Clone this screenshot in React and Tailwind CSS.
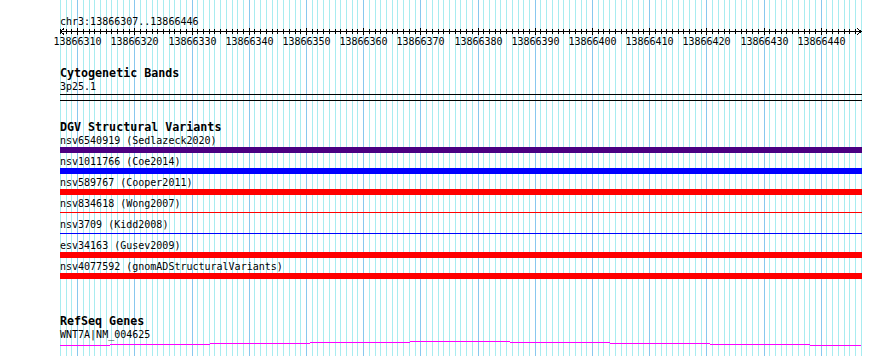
import React from 'react';

const START = 13866307;
const END = 13866446;
const X0 = 60;
const PX = 5.72;
const xOf = (b) => Math.round(X0 + (b - START) * PX);

const mono = { fontFamily: '"DejaVu Sans Mono", "Liberation Mono", monospace' };

const variants = [
  { id: 'nsv6540919', study: 'Sedlazeck2020', color: 'bg-[#4b0082]', thin: false },
  { id: 'nsv1011766', study: 'Coe2014', color: 'bg-[#0000ff]', thin: false },
  { id: 'nsv589767', study: 'Cooper2011', color: 'bg-[#ff0000]', thin: false },
  { id: 'nsv834618', study: 'Wong2007', color: 'bg-[#ff0000]', thin: true },
  { id: 'nsv3709', study: 'Kidd2008', color: 'bg-[#0000ff]', thin: true },
  { id: 'esv34163', study: 'Gusev2009', color: 'bg-[#ff0000]', thin: false },
  { id: 'nsv4077592', study: 'gnomADStructuralVariants', color: 'bg-[#ff0000]', thin: false },
];

// intron line of the gene, stepped like the original raster
const geneSteps = [
  [60, 110, 4],
  [110, 210, 3],
  [210, 310, 2],
  [310, 410, 1],
  [410, 510, 0],
  [510, 610, 1],
  [610, 710, 2],
  [710, 810, 3],
  [810, 861, 4],
];

function Grid() {
  const lines = [];
  for (let b = START; b <= END + 1; b++) {
    lines.push(
      <rect
        key={b}
        x={xOf(b)}
        y={0}
        width={1}
        height={356}
        fill={b % 10 === 0 ? '#88c8ee' : '#a8ecf0'}
      />
    );
  }
  return (
    <svg className="absolute inset-0 pointer-events-none" width="890" height="356" shapeRendering="crispEdges">
      {lines}
    </svg>
  );
}

function Ruler() {
  const ticks = [];
  const labels = [];
  for (let b = START; b <= END; b++) {
    const x = xOf(b) - X0 + 0.5;
    const major = b % 10 === 0;
    ticks.push(<line key={b} x1={x} x2={x} y1={major ? 0 : 1} y2={major ? 7 : 6} stroke="#000" strokeWidth="1" />);
    if (major) {
      labels.push(
        <text key={'l' + b} x={x} y={16.5} textAnchor="middle" fontSize="10" fill="#000" style={mono}>
          {b}
        </text>
      );
    }
  }
  return (
    <svg className="block overflow-visible" width="802" height="20" shapeRendering="crispEdges">
      <line x1="0" x2="802" y1="3.5" y2="3.5" stroke="#000" strokeWidth="1" />
      {ticks}
      <polyline points="4,0.5 0.5,3.5 4,6.5" fill="none" stroke="#000" strokeWidth="1" />
      <polyline points="797,0.5 801.5,3.5 797,6.5" fill="none" stroke="#000" strokeWidth="1" />
      {labels}
    </svg>
  );
}

function Heading({ children, className = '' }) {
  return (
    <div className={`h-[13px] leading-[13px] text-[11.67px] font-bold text-black whitespace-nowrap ${className}`} style={mono}>
      {children}
    </div>
  );
}

function Label({ children }) {
  return (
    <div className="h-[13px] leading-[13px] text-[10px] text-black whitespace-nowrap" style={mono}>
      {children}
    </div>
  );
}

export default function App() {
  return (
    <div className="relative w-[890px] h-[356px] bg-white overflow-hidden">
      <Grid />
      <div className="relative flex flex-col pl-[60px] pt-[15px]">
        <Label>chr3:{START}..{END}</Label>
        <Ruler />

        <Heading className="mt-[19px]">Cytogenetic Bands</Heading>
        <Label>3p25.1</Label>
        <div className="mt-px h-[7px] w-[802px] border-y border-black" />

        <Heading className="mt-[20px]">DGV Structural Variants</Heading>
        {variants.map((v) => (
          <div key={v.id} className="flex flex-col">
            <Label>
              {v.id} ({v.study})
            </Label>
            <div className="h-[8px] w-[802px]">
              {v.thin ? (
                <div className={`mt-[2px] h-px w-full ${v.color}`} />
              ) : (
                <div className={`h-[6px] w-full ${v.color}`} />
              )}
            </div>
          </div>
        ))}

        <Heading className="mt-[34px]">RefSeq Genes</Heading>
        <Label>WNT7A|NM_004625</Label>
        <svg className="block" width="802" height="6" shapeRendering="crispEdges">
          {geneSteps.map(([a, b, y]) => (
            <rect key={a} x={a - X0} y={y} width={b - a} height="1" fill="#ff00ff" />
          ))}
        </svg>
      </div>
    </div>
  );
}
